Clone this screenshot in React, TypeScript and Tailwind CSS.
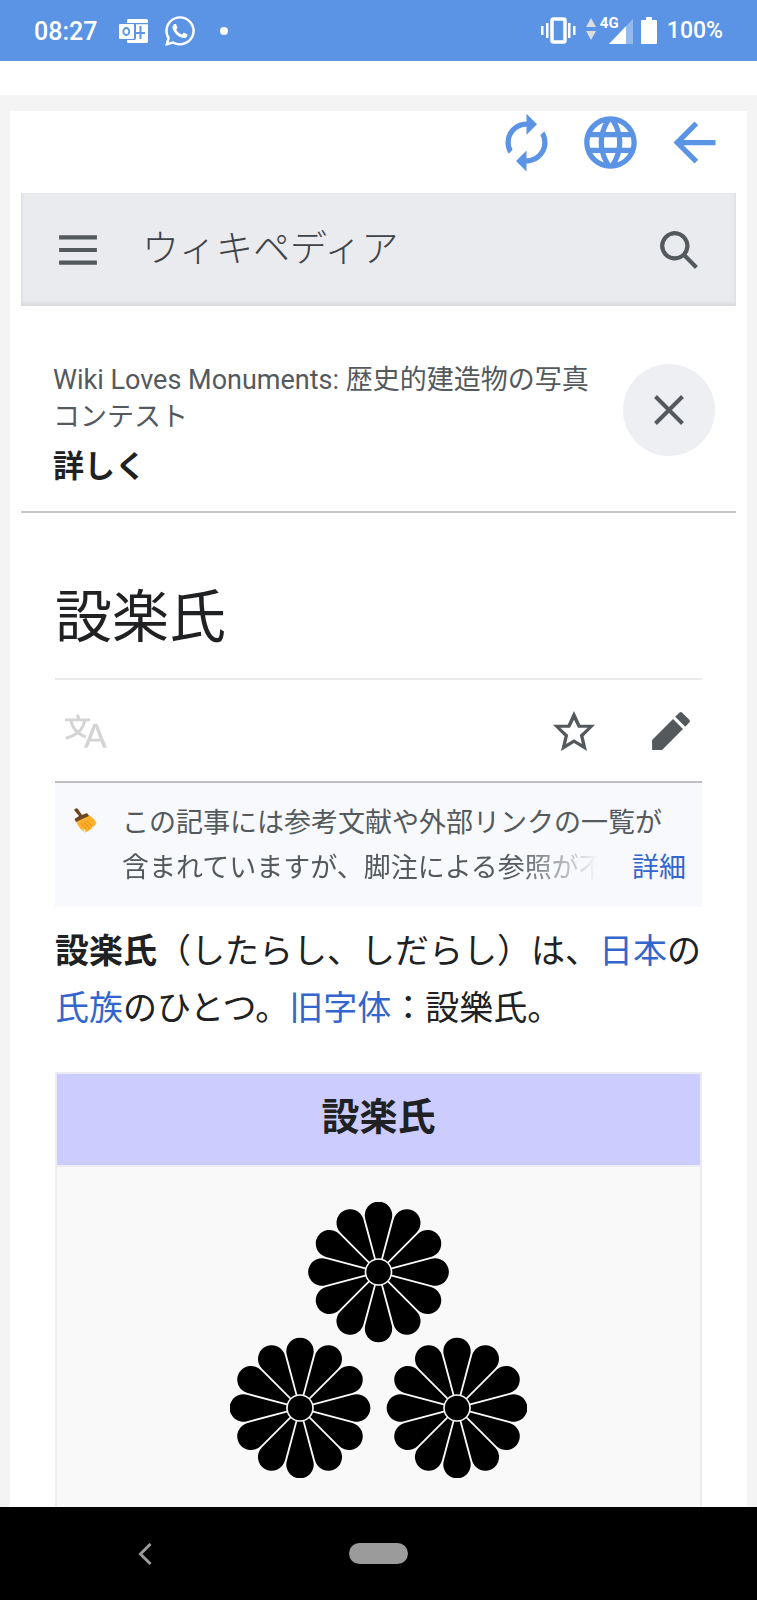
import React from "react";
import { MdAutorenew, MdLanguage, MdArrowBack } from "react-icons/md";
import { FaWhatsapp } from "react-icons/fa";

type IconProps = {
  d: string;
  className?: string;
};

const Icon = ({ d, className = "" }: IconProps) => (
  <svg viewBox="0 0 20 20" fill="currentColor" aria-hidden="true" className={`w-[42px] h-[42px] shrink-0 ${className}`}>
    <path d={d} />
  </svg>
);

const icons = {
  menu: "M1 3v2h18V3zm0 8h18V9H1zm0 6h18v-2H1z",
  search: "M12.2 13.6a7 7 0 1 1 1.4-1.4l5.4 5.4-1.4 1.4zM3 8a5 5 0 1 0 10 0A5 5 0 0 0 3 8",
  language:
    "M20 18h-1.44a.6.6 0 0 1-.4-.12.8.8 0 0 1-.23-.31L17 15h-5l-1 2.54a.8.8 0 0 1-.22.3.6.6 0 0 1-.4.14H9l4.55-11.47h1.89zm-3.53-4.31L14.89 9.5a12 12 0 0 1-.39-1.24q-.09.37-.19.69l-.19.56-1.58 4.19zm-6.3-1.58a13.4 13.4 0 0 1-2.91-1.41 11.46 11.46 0 0 0 2.81-5.37H12V4H7.31a4 4 0 0 0-.2-.56C6.87 2.79 6.6 2 6.6 2l-1.47.5s.4.89.6 1.5H0v1.33h2.15A11.23 11.23 0 0 0 5 10.7a17.2 17.2 0 0 1-5 2.1q.56.82.87 1.38a23.3 23.3 0 0 0 5.22-2.51 15.6 15.6 0 0 0 3.56 1.77zM3.63 5.33h4.91a8.1 8.1 0 0 1-2.45 4.45 9.1 9.1 0 0 1-2.46-4.45",
  star: "M20 7h-7L10 .5 7 7H0l5.46 5.47-1.64 7 6.18-3.7 6.18 3.73-1.63-7zm-10 6.9-3.76 2.27 1-4.28L3.5 8.5h4.61L10 4.6l1.9 3.9h4.6l-3.73 3.4 1 4.28z",
  edit: "M16.77 8l1.94-2a1 1 0 0 0 0-1.41l-3.34-3.3a1 1 0 0 0-1.41 0L12 3.23zM1 14.25V19h4.75l9.96-9.96-4.75-4.75z",
};

const StatusBar = () => (
  <div className="flex h-[61px] shrink-0 items-center justify-between bg-[#5b94e4] px-[34px] text-white">
    <div className="flex items-center">
      <span className="pt-0.5 text-[25px] font-medium">08:27</span>
      <svg viewBox="0 0 29 24" className="ml-[22px] w-[29px] h-6" aria-hidden="true">
        <path fill="#fff" d="M8 4V1.500Q8 0 9.500 0H27.500Q29 0 29 1.500V22.500Q29 24 27.500 24H9Q8 24 8 22.500V21H14Q17 21 17 19V4z" />
        <path fill="#5b94e4" d="M8 4h21v1.300H8zM20.500 7H22.500V20H20.500zM16 13h10V15H16z" />
        <rect x="0" y="5" width="15" height="15" rx="1" fill="#fff" />
        <path d="M15.500 5v15.500H8" fill="none" stroke="#5b94e4" strokeWidth="1" />
        <ellipse cx="7.300" cy="12.500" rx="3" ry="3.500" fill="none" stroke="#5b94e4" strokeWidth="1.800" />
      </svg>
      <FaWhatsapp className="ml-[15px] w-[34px] h-[34px]" />
      <span className="ml-[23px] w-2 h-2 rounded-full bg-white" />
    </div>
    <div className="flex items-center">
      <svg viewBox="0 0 35 27" className="w-[35px] h-[27px]" fill="#fff" aria-hidden="true">
        <path d="M0 9h2.500v9H0zM5 6h2.500v15H5zM27 6h2.500v15H27zM32 9h2.500v9H32z" />
        <rect x="11" y="2" width="13" height="23" rx="1.500" fill="none" stroke="#fff" strokeWidth="3.500" />
      </svg>
      <svg viewBox="0 0 10 24" className="ml-2.5 mb-1 w-2.5 h-6" fill="#dcdcdc" aria-hidden="true">
        <path d="M5 1l5 9H0zM5 23l5-9H0z" />
      </svg>
      <div className="relative ml-1 w-[34px] h-[27px]">
        <span className="absolute left-0 top-0 text-[15px] leading-3 font-bold">4G</span>
        <svg viewBox="0 0 24 25" className="ml-[9px] mt-0.5 w-6 h-[25px]" aria-hidden="true">
          <path d="M0 25L24 0v25z" fill="#fff" opacity=".35" />
          <path d="M0 25L17 7.300V25z" fill="#fff" />
        </svg>
      </div>
      <svg viewBox="0 0 16 27" className="ml-[7px] w-4 h-[27px]" fill="#fff" aria-hidden="true">
        <path d="M5 0h6v3h4q1 0 1 1v22q0 1-1 1H1q-1 0-1-1V4q0-1 1-1h4z" />
      </svg>
      <span className="ml-2.5 pt-0.5 text-[23px] font-medium">100%</span>
    </div>
  </div>
);

const Broom = () => (
  <svg viewBox="0 0 24 25" className="mt-[7px] w-6 h-[25px] shrink-0" aria-hidden="true">
    <path d="M3 13Q10 12 16 7Q21 10 23.500 15Q19 22 12 24.500Q6 21 3 13z" fill="#fdb02a" />
    <path d="M8 15l5 6M11 14l6 7M14 13l5 5" stroke="#e98a12" strokeWidth="1" />
    <path d="M12 24l-1-3M19 19l2 1" stroke="#fff1c4" strokeWidth="1.500" />
    <path d="M1 2Q3-1 5 1L9 7L14 5L16 8L3 14L1.500 11L6 8z" fill="#70451d" />
  </svg>
);

const petals = [0, 30, 60, 90, 120, 150, 180, 210, 240, 270, 300, 330];
const flowers = [
  { x: 148.5, y: 70 },
  { x: 70, y: 206 },
  { x: 227, y: 206 },
];

// three twelve-petal chrysanthemums
const Crest = () => (
  <svg viewBox="0 0 297 276" className="w-[297px] h-[276px]" role="img" aria-label="設楽氏の家紋">
    {flowers.map((f) => (
      <g key={`${f.x}-${f.y}`} transform={`translate(${f.x} ${f.y})`}>
        {petals.map((a) => (
          <path key={a} transform={`rotate(${a})`} d="M-2.700-13.500L-13.200-53A13.700 13.700 0 1 1 13.200-53L2.700-13.500Q0-14.200-2.700-13.500z" />
        ))}
        <circle r="12.200" />
      </g>
    ))}
  </svg>
);

const App = () => {
  return (
    <div className="flex min-h-screen flex-col bg-[#f4f4f4] font-['Roboto','Noto_Sans_CJK_JP',sans-serif] text-[#202122]" lang="ja">
      <StatusBar />
      <div className="h-[34px] shrink-0 bg-white" />

      <div className="mx-2.5 mt-4 flex flex-1 flex-col bg-white px-[11px]">
        <div className="mb-[19px] flex justify-end gap-[21px] pr-2.5 text-[#5b94e4]">
          <button aria-label="更新">
            <MdAutorenew className="w-[63px] h-[63px]" />
          </button>
          <button aria-label="ブラウザで開く">
            <MdLanguage className="w-[63px] h-[63px]" />
          </button>
          <button aria-label="戻る">
            <MdArrowBack className="w-[63px] h-[63px]" />
          </button>
        </div>

        <header className="flex h-[113px] items-center bg-[#eaebef] px-9 text-[#54595d] shadow-[inset_0_-2px_4px_rgba(0,0,0,0.10)]">
          <button aria-label="メニュー">
            <Icon d={icons.menu} />
          </button>
          <a href="#top" className="ml-[43px] text-[37px] font-light text-[#3f4347]">
            ウィキペディア
          </a>
          <button aria-label="検索" className="ml-auto">
            <Icon d={icons.search} />
          </button>
        </header>

        <section className="flex gap-[22px] border-b-2 border-[#c8c8c8] pb-[26px] pl-8 pr-[21px] pt-14">
          <div className="flex-1">
            <p className="text-[27px] leading-[37px] text-[#54595d]">Wiki Loves Monuments: 歴史的建造物の写真コンテスト</p>
            <a href="#more" className="mt-3 block text-[31px] leading-[37px] font-bold">
              詳しく
            </a>
          </div>
          <button aria-label="閉じる" className="mt-0.5 flex w-[92px] h-[92px] items-center justify-center rounded-full bg-[#eeeff3] text-[#54595d]">
            <svg viewBox="0 0 30 30" className="w-[30px] h-[30px]" fill="none" stroke="currentColor" strokeWidth="4" aria-hidden="true">
              <path d="M1.500 1.500l27 27M28.500 1.500l-27 27" />
            </svg>
          </button>
        </section>

        <article id="top" className="flex flex-1 flex-col px-[34px] pt-[69px]">
          <h1 className="border-b-2 border-[#eaeaea] pb-6 text-[57px] leading-[72px]">設楽氏</h1>
          <div className="flex h-[103px] items-center border-b-2 border-[#c0c0c4] px-2.5 text-[#54595d]">
            <button aria-label="言語" className="mr-auto text-[#d3d4d5]">
              <Icon d={icons.language} />
            </button>
            <button aria-label="ウォッチ" className="mr-[55px]">
              <Icon d={icons.star} />
            </button>
            <button aria-label="編集">
              <Icon d={icons.edit} />
            </button>
          </div>

          <div className="flex bg-[#f8f9fc] pb-4 pl-[18px] pr-4 pt-[18px] text-[27px] leading-[45px] text-[#54595d]">
            <Broom />
            <div className="ml-[25px] min-w-0 flex-1">
              <p className="whitespace-nowrap">この記事には参考文献や外部リンクの一覧が</p>
              <div className="flex justify-between">
                <p className="whitespace-nowrap [mask-image:linear-gradient(to_left,transparent_8px,black_90px)]">
                  含まれていますが、脚注による参照が不
                </p>
                <a href="#details" className="text-[#3366cc]">
                  詳細
                </a>
              </div>
            </div>
          </div>

          <p className="pb-[35px] pt-4 text-[34px] leading-[57px]">
            <b>設楽氏</b>（したらし、しだらし）は、
            <a href="#japan" className="text-[#3366cc]">
              日本
            </a>
            の
            <a href="#clan" className="text-[#3366cc]">
              氏族
            </a>
            のひとつ。
            <a href="#kyujitai" className="text-[#3366cc]">
              旧字体
            </a>
            ：設樂氏。
          </p>

          <div className="flex flex-1 flex-col border-x-2 border-t-2 border-[#eaecf0] bg-[#f9f9f9]">
            <h2 className="border-b-2 border-[#eaecf0] bg-[#ccccff] pb-5 pt-4 text-center text-[38px] leading-[55px] font-bold">設楽氏</h2>
            <div className="flex justify-center pb-[29px] pt-[35px]">
              <Crest />
            </div>
          </div>
        </article>
      </div>

      <nav className="grid h-[93px] shrink-0 grid-cols-[1fr_59px_1fr] items-center bg-black">
        <button aria-label="戻る" className="ml-[138px] justify-self-start">
          <svg viewBox="0 0 14 22" className="w-3.5 h-[22px]" fill="none" stroke="#9b9b9b" strokeWidth="3" aria-hidden="true">
            <path d="M12.500 1L2.500 11l10 10" />
          </svg>
        </button>
        <button aria-label="ホーム" className="h-[21px] rounded-full bg-[#9b9b9b]" />
      </nav>
    </div>
  );
};

export default App;
